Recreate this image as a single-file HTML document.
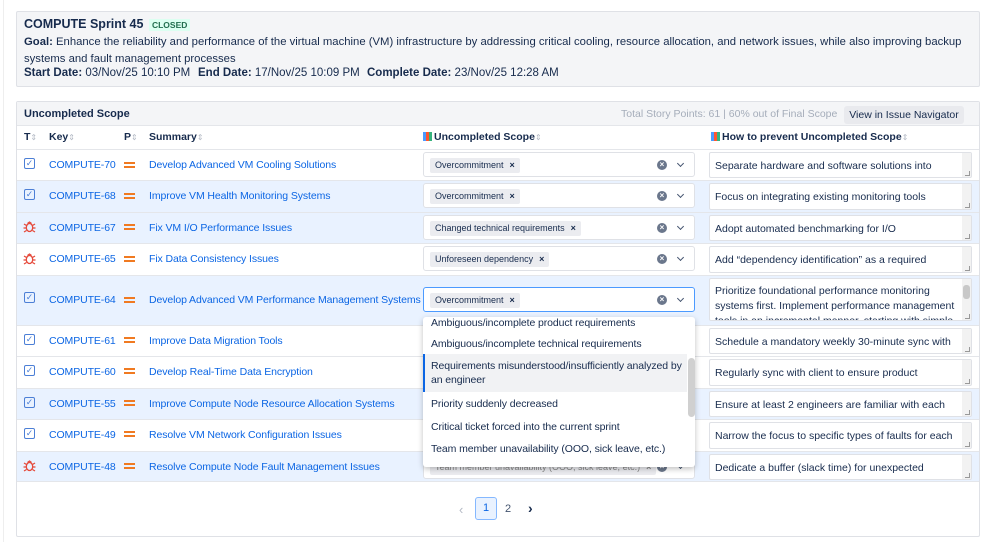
<!DOCTYPE html>
<html><head><meta charset="utf-8"><style>
*{box-sizing:border-box;margin:0;padding:0}
body{width:998px;height:542px;position:relative;background:#fff;font-family:"Liberation Sans",sans-serif;color:#172b4d;overflow:hidden}
.a{position:absolute}
.box1{left:16px;top:11px;width:964px;height:76px;background:#f4f5f7;border:1px solid #dfe1e6;border-radius:2px}
.box2{left:16px;top:101px;width:964px;height:436px;border:1px solid #dfe1e6;border-radius:2px;background:#fff}
.t{font-size:11.5px;white-space:nowrap}
b{font-weight:bold}
.row{left:17px;width:962px;border-top:1px solid #e4e6ea}
.blue{background:#e9f2ff}
.lk{color:#0c66e4;font-size:10.5px;white-space:nowrap;letter-spacing:-0.1px}
.sel{left:423px;width:272px;height:25px;background:#fff;border:1px solid #dfe1e6;border-radius:3px}
.tag{position:absolute;left:6px;top:5px;height:15px;background:#ebecf0;border-radius:2px;font-size:9px;line-height:15px;padding:0 5px;color:#172b4d;white-space:nowrap}
.tag i{font-style:normal;font-weight:bold;margin-left:6px;font-size:9px}
.clr{position:absolute;right:27px;top:7px;width:10px;height:10px;border-radius:50%;background:#6b778c;color:#fff;font-size:8px;line-height:10px;text-align:center;font-weight:bold}
.chev{position:absolute;right:11px;top:8px;width:5px;height:5px;border-right:1.5px solid #44546f;border-bottom:1.5px solid #44546f;transform:rotate(45deg)}
.ta{left:709px;width:263px;background:#fff;border:1px solid #dfe1e6;border-radius:2px;font-size:10.5px;padding:6px 5px;overflow:hidden;color:#172b4d;line-height:15px;white-space:nowrap}
.ta:after{content:"";position:absolute;right:1px;bottom:1px;width:4px;height:4px;border-right:1px solid #999;border-bottom:1px solid #999}
.ta .sb{position:absolute;right:0;top:0;width:9px;height:100%;background:#f2f2f2}
.ico{left:24px;width:11px;height:11px;border:1.5px solid #4c7fd6;border-radius:2px;color:#4c7fd6;font-size:9px;line-height:8px;text-align:center}
.bug{left:23px;width:13px;height:13px}
.pri{left:124px;width:11px;height:6px}
.pri:before,.pri:after{content:"";position:absolute;left:0;width:11px;height:2px;background:#f07a21}
.pri:before{top:0}.pri:after{top:4px}
.hd{font-size:10.5px;font-weight:bold;color:#172b4d;white-space:nowrap}
.hd s{text-decoration:none;color:#b3b9c4;font-weight:normal;font-size:8px}
.chart{display:inline-block;width:9px;height:9px;background:linear-gradient(90deg,#4c9aff 0 33%,#ff5630 33% 66%,#36b37e 66%);margin-right:2px;vertical-align:-1px}
.dd{left:423px;top:317px;width:272px;height:150px;background:#fff;box-shadow:0 2px 6px rgba(0,0,0,.25);border-radius:3px;overflow:hidden}
.it{position:absolute;left:0;width:264px;font-size:10.5px;color:#172b4d;padding-left:8px;line-height:14px;letter-spacing:-0.1px}
</style></head><body>
<svg width="0" height="0" style="position:absolute"><defs><g id="bg"><g fill="none" stroke="#e5493a" stroke-width="1.3"><ellipse cx="6.5" cy="7.5" rx="3.2" ry="4"/><path d="M4.5 3.5 L6.5 2 L8.5 3.5 M1 4 L3.5 5.5 M12 4 L9.5 5.5 M0.5 8 H3.3 M12.5 8 H9.7 M1 12 L3.5 10.5 M12 12 L9.5 10.5"/></g></g></defs></svg>
<div class="a" style="left:3px;top:0;width:1px;height:542px;background:#eee"></div>
<div class="a box1"></div>
<div class="a t" style="left:24px;top:17px;font-size:12.5px"><b>COMPUTE Sprint 45</b> <span style="font-size:8.5px;font-weight:bold;color:#216e4e;background:#dcfff1;padding:1px 3px;margin-left:2px">CLOSED</span></div>
<div class="a" style="left:24px;top:34px;font-size:11.3px;line-height:17px;width:952px"><b>Goal:</b> Enhance the reliability and performance of the virtual machine (VM) infrastructure by addressing critical cooling, resource allocation, and network issues, while also improving backup systems and fault management processes</div>
<div class="a t" style="left:24px;top:67px"><b>Start Date:</b> 03/Nov/25 10:10 PM</div>
<div class="a t" style="left:198px;top:67px"><b>End Date:</b> 17/Nov/25 10:09 PM</div>
<div class="a t" style="left:367px;top:67px"><b>Complete Date:</b> 23/Nov/25 12:28 AM</div>

<div class="a box2"></div>
<div class="a" style="left:17px;top:102px;width:962px;height:24px;background:#f4f5f7;border-bottom:1px solid #e4e6ea"></div>
<div class="a hd" style="left:24px;top:108px;font-size:11px">Uncompleted Scope</div>
<div class="a" style="left:621px;top:108px;font-size:10.5px;color:#a5adba;white-space:nowrap">Total Story Points: 61 | 60% out of Final Scope</div>
<div class="a" style="left:844px;top:106px;width:120px;height:18px;background:#e9eaee;border-radius:3px;font-size:10.5px;line-height:18px;text-align:center;color:#172b4d">View in Issue Navigator</div>

<div class="a hd" style="left:24px;top:131px">T<s>⇕</s></div>
<div class="a hd" style="left:49px;top:131px">Key<s>⇕</s></div>
<div class="a hd" style="left:124px;top:131px">P<s>⇕</s></div>
<div class="a hd" style="left:149px;top:131px">Summary<s>⇕</s></div>
<div class="a hd" style="left:423px;top:131px"><span class="chart"></span>Uncompleted Scope<s>⇕</s></div>
<div class="a hd" style="left:711px;top:131px"><span class="chart"></span>How to prevent Uncompleted Scope<s>⇕</s></div>

<div class="a row" style="top:149px;height:31px"></div>
<div class="a row blue" style="top:180px;height:32px"></div>
<div class="a row blue" style="top:212px;height:31px"></div>
<div class="a row" style="top:243px;height:32px"></div>
<div class="a row blue" style="top:275px;height:50px"></div>
<div class="a row" style="top:325px;height:31px"></div>
<div class="a row" style="top:356px;height:32px"></div>
<div class="a row blue" style="top:388px;height:31px"></div>
<div class="a row" style="top:419px;height:32px"></div>
<div class="a row blue" style="top:451px;height:31px;border-bottom:1px solid #e4e6ea"></div>

<div class="a ico" style="top:158px">✓</div>
<div class="a ico" style="top:189px">✓</div>
<svg class="a bug" style="top:220px" viewBox="0 0 13 13"><use href="#bg"/></svg>
<svg class="a bug" style="top:252px" viewBox="0 0 13 13"><use href="#bg"/></svg>
<div class="a ico" style="top:292px">✓</div>
<div class="a ico" style="top:334px">✓</div>
<div class="a ico" style="top:365px">✓</div>
<div class="a ico" style="top:397px">✓</div>
<div class="a ico" style="top:428px">✓</div>
<svg class="a bug" style="top:459px" viewBox="0 0 13 13"><use href="#bg"/></svg>

<div class="a lk" style="left:49px;top:159px">COMPUTE-70</div>
<div class="a lk" style="left:49px;top:190px">COMPUTE-68</div>
<div class="a lk" style="left:49px;top:222px">COMPUTE-67</div>
<div class="a lk" style="left:49px;top:253px">COMPUTE-65</div>
<div class="a lk" style="left:49px;top:294px">COMPUTE-64</div>
<div class="a lk" style="left:49px;top:335px">COMPUTE-61</div>
<div class="a lk" style="left:49px;top:366px">COMPUTE-60</div>
<div class="a lk" style="left:49px;top:398px">COMPUTE-55</div>
<div class="a lk" style="left:49px;top:429px">COMPUTE-49</div>
<div class="a lk" style="left:49px;top:461px">COMPUTE-48</div>

<div class="a pri" style="top:162px"></div>
<div class="a pri" style="top:193px"></div>
<div class="a pri" style="top:224px"></div>
<div class="a pri" style="top:256px"></div>
<div class="a pri" style="top:297px"></div>
<div class="a pri" style="top:337px"></div>
<div class="a pri" style="top:368px"></div>
<div class="a pri" style="top:400px"></div>
<div class="a pri" style="top:431px"></div>
<div class="a pri" style="top:463px"></div>

<div class="a lk" style="left:149px;top:159px">Develop Advanced VM Cooling Solutions</div>
<div class="a lk" style="left:149px;top:190px">Improve VM Health Monitoring Systems</div>
<div class="a lk" style="left:149px;top:222px">Fix VM I/O Performance Issues</div>
<div class="a lk" style="left:149px;top:253px">Fix Data Consistency Issues</div>
<div class="a lk" style="left:149px;top:294px">Develop Advanced VM Performance Management Systems</div>
<div class="a lk" style="left:149px;top:335px">Improve Data Migration Tools</div>
<div class="a lk" style="left:149px;top:366px">Develop Real-Time Data Encryption</div>
<div class="a lk" style="left:149px;top:398px">Improve Compute Node Resource Allocation Systems</div>
<div class="a lk" style="left:149px;top:429px">Resolve VM Network Configuration Issues</div>
<div class="a lk" style="left:149px;top:461px">Resolve Compute Node Fault Management Issues</div>

<div class="a sel" style="top:152px"><span class="tag">Overcommitment<i>×</i></span><span class="clr">×</span><span class="chev"></span></div>
<div class="a sel" style="top:183px"><span class="tag">Overcommitment<i>×</i></span><span class="clr">×</span><span class="chev"></span></div>
<div class="a sel" style="top:215px"><span class="tag">Changed technical requirements<i>×</i></span><span class="clr">×</span><span class="chev"></span></div>
<div class="a sel" style="top:246px"><span class="tag">Unforeseen dependency<i>×</i></span><span class="clr">×</span><span class="chev"></span></div>
<div class="a sel" style="top:287px;border-color:#4c9aff"><span class="tag">Overcommitment<i>×</i></span><span class="clr">×</span><span class="chev"></span></div>
<div class="a sel" style="top:454px"><span class="tag" style="color:#888">Team member unavailability (OOO, sick leave, etc.)<i>×</i></span><span class="clr">×</span><span class="chev"></span></div>

<div class="a ta" style="top:152px;height:26px">Separate hardware and software solutions into<span class="sb"></span></div>
<div class="a ta" style="top:183px;height:27px">Focus on integrating existing monitoring tools<span class="sb"></span></div>
<div class="a ta" style="top:215px;height:26px">Adopt automated benchmarking for I/O<span class="sb"></span></div>
<div class="a ta" style="top:246px;height:27px">Add “dependency identification” as a required<span class="sb"></span></div>
<div class="a ta" style="top:278px;height:43px;padding-top:5px">Prioritize foundational performance monitoring<br>systems first. Implement performance management<br>tools in an incremental manner, starting with simple<span class="sb"><span style="position:absolute;left:1px;top:6px;width:7px;height:14px;background:#c8c8c8;border-radius:3px"></span></span></div>
<div class="a ta" style="top:328px;height:26px">Schedule a mandatory weekly 30-minute sync with<span class="sb"></span></div>
<div class="a ta" style="top:359px;height:27px">Regularly sync with client to ensure product<span class="sb"></span></div>
<div class="a ta" style="top:391px;height:26px">Ensure at least 2 engineers are familiar with each<span class="sb"></span></div>
<div class="a ta" style="top:422px;height:27px">Narrow the focus to specific types of faults for each<span class="sb"></span></div>
<div class="a ta" style="top:454px;height:26px">Dedicate a buffer (slack time) for unexpected<span class="sb"></span></div>

<div class="a dd">
 <div class="it" style="top:-1px">Ambiguous/incomplete product requirements</div>
 <div class="it" style="top:20px">Ambiguous/incomplete technical requirements</div>
 <div class="it" style="top:37px;height:38px;background:#f1f2f4;border-left:2px solid #0c66e4;padding-left:6px;padding-top:5px;white-space:nowrap">Requirements misunderstood/insufficiently analyzed by<br>an engineer</div>
 <div class="it" style="top:80px">Priority suddenly decreased</div>
 <div class="it" style="top:103px">Critical ticket forced into the current sprint</div>
 <div class="it" style="top:125px">Team member unavailability (OOO, sick leave, etc.)</div>
 <div class="a" style="left:265px;top:41px;width:7px;height:59px;background:#d0d0d0;border-radius:4px"></div>
</div>

<div class="a" style="left:459px;top:502px;font-size:13px;color:#b3b9c4">‹</div>
<div class="a" style="left:475px;top:497px;width:22px;height:23px;border:1px solid #85b8ff;background:#e9f2ff;border-radius:3px;font-size:11px;line-height:21px;text-align:center;color:#0c66e4">1</div>
<div class="a" style="left:505px;top:503px;font-size:11px;color:#44546f">2</div>
<div class="a" style="left:528px;top:500px;font-size:14px;color:#172b4d;font-weight:bold">›</div>
</body></html>
